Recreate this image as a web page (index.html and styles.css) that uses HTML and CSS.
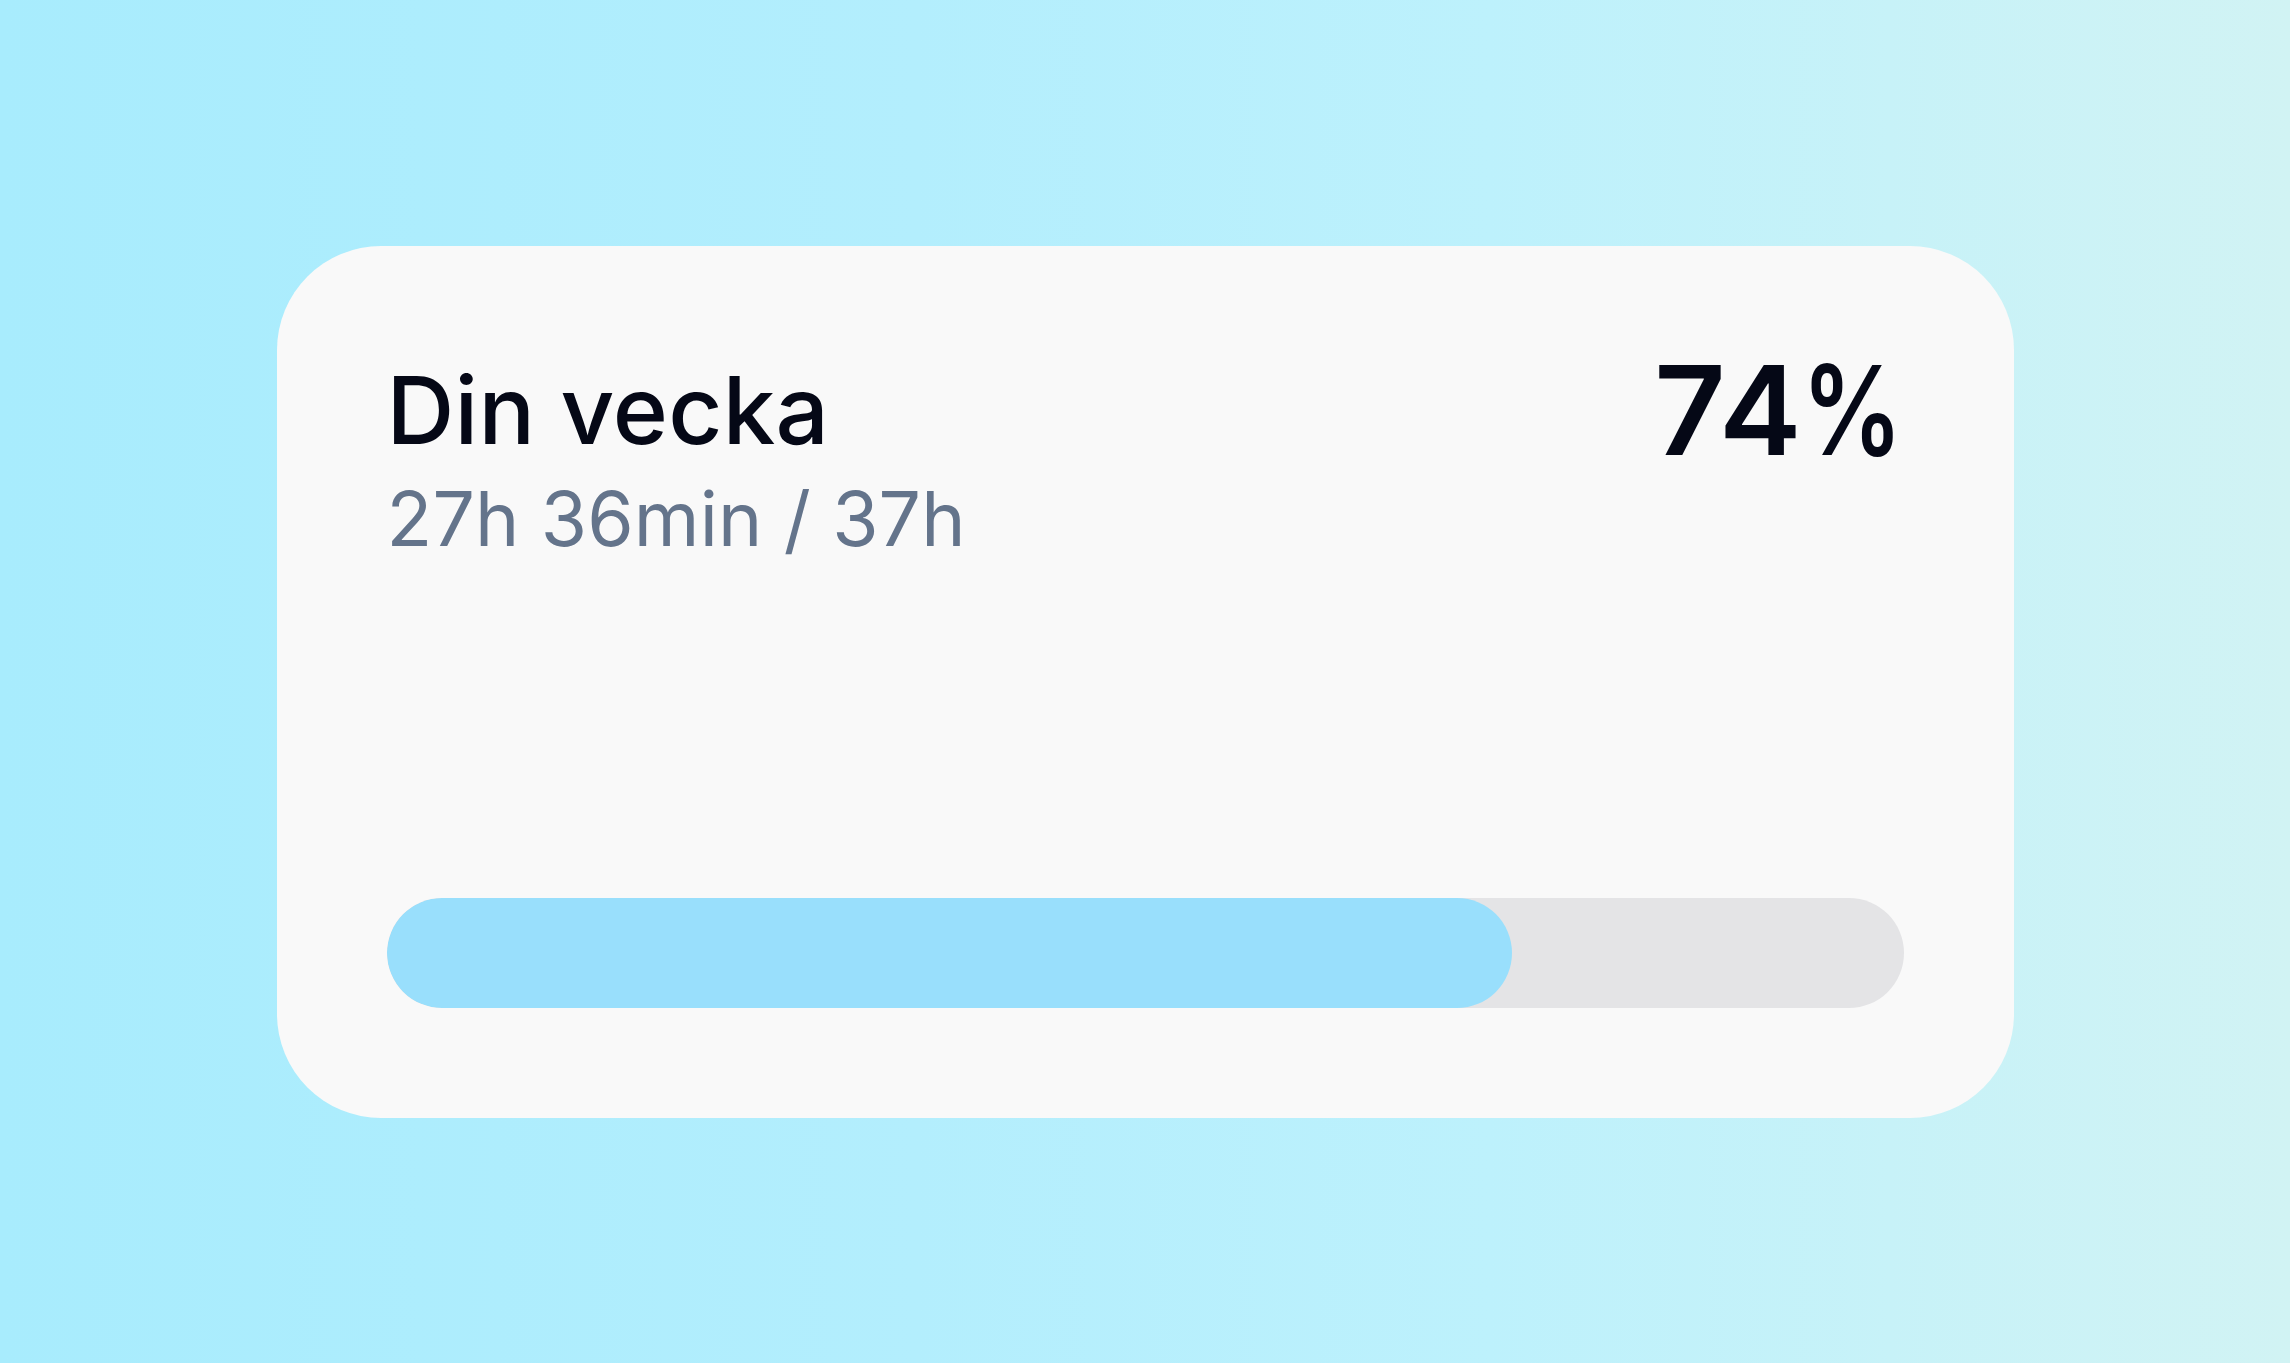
FILE: index.html
```html
<html>
    <head>
        <title>Din vecka</title>
        <link rel="stylesheet" href="styles.css">
    </head>
    <body>
        <div class="card">
            <div class="card-head">
                <div>
                    <h2 class="title">Din vecka</h2>
                    <p class="hours">27h 36min / 37h</p>
                </div>
                <div class="percent">74<span class="sign">%</span></div>
            </div>

            <div class="track">
                <div class="fill" style="width: 74.2%"></div>
            </div>
        </div>
    </body>
</html>
```

FILE: styles.css
```css
body {
    margin: 0;
    height: 100vh;
    display: flex;
    align-items: center;
    justify-content: center;
    font-family: Inter, "Noto Sans", sans-serif;
    background: linear-gradient(90deg, #a8ecfd 0%, #b3eefd 40%, #bdf1fc 65%, #d1f3f4 100%);
}
.card {
    box-sizing: border-box;
    width: 1737px;
    height: 872px;
    padding: 110px;
    border-radius: 104px;
    background-color: #f9f9f9;
    display: flex;
    flex-direction: column;
    justify-content: space-between;
}
.card-head {
    display: flex;
    justify-content: space-between;
    align-items: flex-start;
}
.title {
    margin: 7px 0 0;
    font-size: 94px;
    font-weight: 500;
    line-height: 1;
    color: #050816;
    letter-spacing: 0.002em;
}
.hours {
    margin: 21px 0 0;
    font-size: 75px;
    line-height: 1.1;
    color: #64748b;
    letter-spacing: 0.002em;
}
.percent {
    font-size: 124px;
    font-weight: 600;
    line-height: 1;
    color: #050816;
    letter-spacing: 0.005em;
    margin-top: -8px;
}
/* the percent sign is drawn a bit narrower than the digits */
.sign {
    display: inline-block;
    margin-left: -24px;
    transform: scaleX(0.81);
    transform-origin: right center;
}
.track {
    height: 110px;
    border-radius: 55px;
    background-color: #e4e4e6;
    overflow: hidden;
}
.fill {
    height: 100%;
    border-radius: 55px;
    background-color: #99dffc;
}
```
